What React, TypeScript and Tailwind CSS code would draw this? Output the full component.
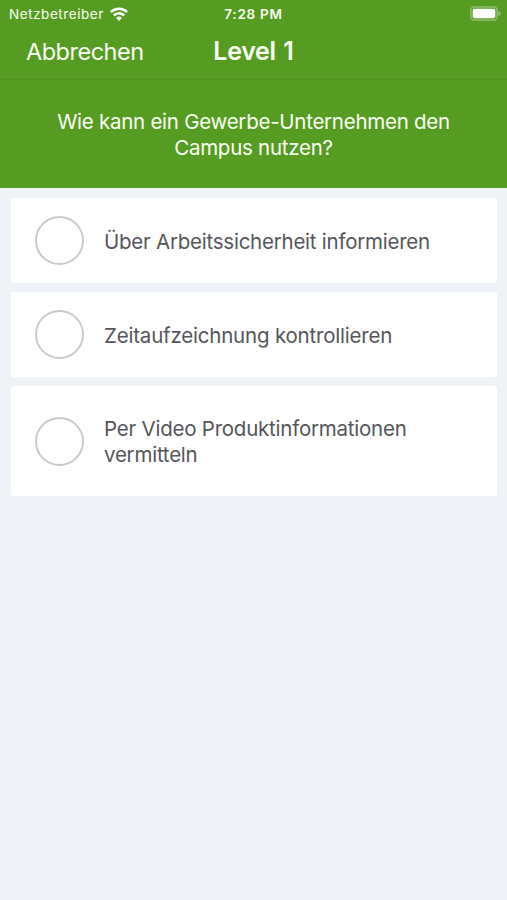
const answers = [
  { lines: ['Über Arbeitssicherheit informieren'], box: 'h-[85px]', tracking: 'tracking-[-0.24px]' },
  { lines: ['Zeitaufzeichnung kontrollieren'], box: 'h-[85px]', tracking: 'tracking-[-0.2px]' },
  { lines: ['Per Video Produktinformationen', 'vermitteln'], box: 'h-[110px]', tracking: 'tracking-[-0.23px]' },
];

function WifiIcon() {
  return (
    <svg className="-mt-[1px]" width="18" height="14" viewBox="0 0 18 14" fill="none" stroke="#fff" strokeWidth="2.5">
      <path d="M0.9 5.2a11.4 11.4 0 0 1 16.2 0" />
      <path d="M3.8 8.5a7.3 7.3 0 0 1 10.4 0" />
      <path d="M9 13.9L6.1 11a4.1 4.1 0 0 1 5.8 0z" fill="#fff" stroke="none" />
    </svg>
  );
}

function BatteryIcon() {
  return (
    <svg className="-mt-[1px]" width="31" height="15" viewBox="0 0 31 15">
      <rect x="0.9" y="0.9" width="26.2" height="13.2" rx="3.4" fill="none" stroke="#fff" strokeOpacity="0.35" strokeWidth="1.5" />
      <rect x="2.7" y="2.8" width="22.6" height="9.4" rx="1.6" fill="#fff" />
      <path d="M28.5 5.2c1.3.5 2 1.3 2 2.3s-.7 1.8-2 2.3z" fill="#fff" fillOpacity="0.45" />
    </svg>
  );
}

export default function App() {
  return (
    <div className="flex h-[900px] w-[507px] flex-col overflow-hidden bg-[#eff3f8] font-['Inter',sans-serif]">
      <header className="bg-[#579c22] text-[#fbfff4]">
        <div className="grid h-[27px] grid-cols-3 items-center px-[9px]">
          <div className="flex items-center gap-[6px]">
            <span className="whitespace-nowrap pt-px text-[13.5px] leading-[27px] tracking-[0.55px]">Netzbetreiber</span>
            <WifiIcon />
          </div>
          <span className="pt-px text-center text-[13.5px] font-semibold leading-[27px] tracking-[0.75px]">7:28 PM</span>
          <div className="-mr-[3px] flex justify-end">
            <BatteryIcon />
          </div>
        </div>
        <div className="grid h-[53px] grid-cols-3 border-b border-[#4f931e] px-[26px] pb-[4px]">
          <button className="text-left text-[23.5px] leading-[49px] tracking-[-0.5px]">Abbrechen</button>
          <h1 className="text-center text-[25px] font-semibold leading-[48px] tracking-[-0.3px] [word-spacing:1.5px]">Level 1</h1>
        </div>
        <div className="h-[108.4px] pt-[29px] text-center text-[20.5px] leading-[25.5px] tracking-[-0.26px]">
          <p>Wie kann ein Gewerbe-Unternehmen den</p>
          <p>Campus nutzen?</p>
        </div>
      </header>
      <main className="flex flex-col gap-[9px] pb-[10px] pl-[11px] pr-[10px] pt-[9.9px]">
        {answers.map((a) => (
          <button
            key={a.lines[0]}
            className={`flex w-full items-center gap-[20px] rounded-[2px] bg-white pl-[24px] text-left ${a.box}`}
          >
            <span className="h-[49px] w-[49px] shrink-0 rounded-full border-2 border-[#cbcbcb]" />
            <span className={`pt-px text-[20.5px] leading-[25.5px] text-[#55565a] ${a.tracking}`}>
              {a.lines.map((l) => (
                <span key={l} className="block whitespace-nowrap">{l}</span>
              ))}
            </span>
          </button>
        ))}
      </main>
    </div>
  );
}
